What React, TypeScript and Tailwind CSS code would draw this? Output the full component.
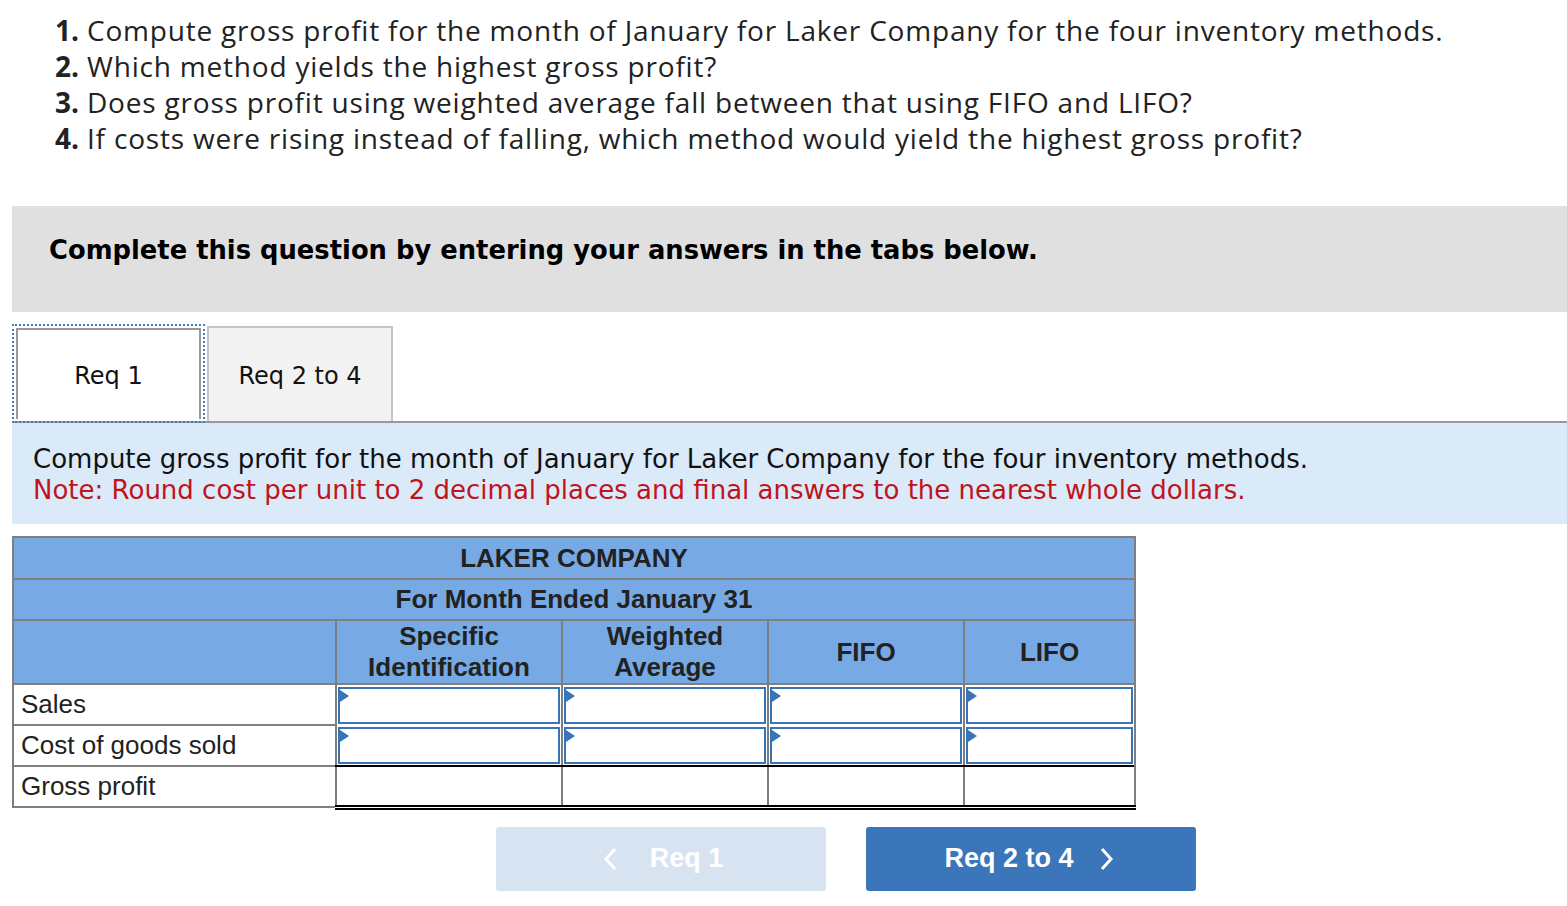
import React from "react";

const InputCell = ({ last }: { last?: boolean }) => (
  <td className={`border-l-2 border-[#7f7f7f] p-0 h-[41px] ${last ? "border-r-2" : ""}`}>
    <div className="relative mx-[1px] h-[37px] border-2 border-[#3a74b8] bg-white">
      <div className="absolute left-0 top-[1px] w-0 h-0 border-t-[6px] border-b-[6px] border-l-[9px] border-t-transparent border-b-transparent border-l-[#3a74b8]" />
    </div>
  </td>
);

const GpCell = ({ last }: { last?: boolean }) => (
  <td
    className={`border-l-2 border-l-[#7f7f7f] border-t-2 border-t-black border-b-[5px] border-b-black border-double ${
      last ? "border-r-2 border-r-[#7f7f7f]" : ""
    }`}
  ></td>
);

export default function App() {
  const q = [
    ["1.", "Compute gross profit for the month of January for Laker Company for the four inventory methods."],
    ["2.", "Which method yields the highest gross profit?"],
    ["3.", "Does gross profit using weighted average fall between that using FIFO and LIFO?"],
    ["4.", "If costs were rising instead of falling, which method would yield the highest gross profit?"],
  ];
  return (
    <div className="w-[1567px] h-[906px] bg-white overflow-hidden">
      <div className="pt-[12px] pl-[44px] font-['Open_Sans',sans-serif] text-[28px] leading-[36px] tracking-[0.8px] text-[#222]">
        {q.map(([n, t]) => (
          <div key={n} className="flex whitespace-nowrap">
            <span className="font-bold w-[35px] text-right tracking-normal">{n}</span>
            <span className="ml-[8px]">{t}</span>
          </div>
        ))}
      </div>

      <div className="ml-[12px] mt-[50px] h-[106px] bg-[#e0e0e0] pl-[37px] pt-[28px]">
        <span className="font-['DejaVu_Sans',sans-serif] font-bold text-[25.8px] leading-[32px] text-black whitespace-nowrap">
          Complete this question by entering your answers in the tabs below.
        </span>
      </div>

      <div className="ml-[12px] mt-[12px] flex items-end h-[99px] border-b-2 border-[#999] font-['DejaVu_Sans',sans-serif] text-[24px] text-[#111]">
        <div className="h-[99px] w-[193px] border-2 border-dotted border-[#3d7cc9] p-[2px] mb-[-2px]">
          <div className="h-full border-2 border-b-0 border-[#999] bg-white flex items-center justify-center pt-[2px]">
            Req 1
          </div>
        </div>
        <div className="h-[95px] w-[186px] border-2 border-b-0 border-[#c4c4c4] bg-[#f2f2f2] flex items-center justify-center ml-[2px] pt-[2px]">
          Req 2 to 4
        </div>
      </div>

      <div className="ml-[12px] h-[101px] bg-[#daeaf8] pl-[21px] pt-[21px] font-['DejaVu_Sans',sans-serif] text-[26px] leading-[31px]">
        <div className="text-[#111] whitespace-nowrap">
          Compute gross profit for the month of January for Laker Company for the four inventory methods.
        </div>
        <div className="text-[#c0141c] whitespace-nowrap">
          Note: Round cost per unit to 2 decimal places and final answers to the nearest whole dollars.
        </div>
      </div>

      <div className="ml-[12px] mt-[12px]">
        <table className="border-collapse font-['Liberation_Sans',Arial,sans-serif] table-fixed w-[1122px]">
          <colgroup>
            <col className="w-[323px]" />
            <col className="w-[226px]" />
            <col className="w-[206px]" />
            <col className="w-[196px]" />
            <col className="w-[171px]" />
          </colgroup>
          <tbody>
            <tr className="h-[42px] bg-[#77aae4]">
              <td colSpan={5} className="border-2 border-[#7f7f7f] text-center font-bold text-[26px] text-[#222] pt-[1px]">
                LAKER COMPANY
              </td>
            </tr>
            <tr className="h-[41px] bg-[#77aae4]">
              <td colSpan={5} className="border-2 border-[#7f7f7f] text-center font-bold text-[26px] text-[#222]">
                For Month Ended January 31
              </td>
            </tr>
            <tr className="h-[64px] bg-[#77aae4] font-bold text-[26px] text-[#222] leading-[31px]">
              <td className="border-2 border-[#7f7f7f]"></td>
              <td className="border-2 border-[#7f7f7f] text-center">Specific<br />Identification</td>
              <td className="border-2 border-[#7f7f7f] text-center">Weighted<br />Average</td>
              <td className="border-2 border-[#7f7f7f] text-center">FIFO</td>
              <td className="border-2 border-[#7f7f7f] text-center">LIFO</td>
            </tr>
            <tr className="h-[41px]">
              <td className="border-2 border-[#7f7f7f] pl-[7px] text-[26px] text-[#222]">Sales</td>
              <InputCell />
              <InputCell />
              <InputCell />
              <InputCell last />
            </tr>
            <tr className="h-[41px]">
              <td className="border-2 border-[#7f7f7f] pl-[7px] text-[26px] text-[#222]">Cost of goods sold</td>
              <InputCell />
              <InputCell />
              <InputCell />
              <InputCell last />
            </tr>
            <tr className="h-[41px]">
              <td className="border-2 border-[#7f7f7f] pl-[7px] text-[26px] text-[#222]">Gross profit</td>
              <GpCell />
              <GpCell />
              <GpCell />
              <GpCell last />
            </tr>
          </tbody>
        </table>
      </div>

      <div className="mt-[17px] ml-[496px] flex gap-[40px] font-['Liberation_Sans',Arial,sans-serif] font-bold text-[27px] text-white">
        <div className="w-[330px] h-[64px] rounded-[3px] bg-[#d7e3f1] flex items-center justify-center gap-[33px] pl-[4px]">
          <svg width="14" height="24" viewBox="0 0 14 24" fill="none" stroke="white" strokeWidth="3">
            <path d="M12 2 L3 12 L12 22" />
          </svg>
          <span>Req 1</span>
        </div>
        <div className="w-[330px] h-[64px] rounded-[3px] bg-[#3a76b9] flex items-center justify-center gap-[26px] pr-[4px]">
          <span>Req 2 to 4</span>
          <svg width="14" height="24" viewBox="0 0 14 24" fill="none" stroke="white" strokeWidth="3">
            <path d="M2 2 L11 12 L2 22" />
          </svg>
        </div>
      </div>
    </div>
  );
}
